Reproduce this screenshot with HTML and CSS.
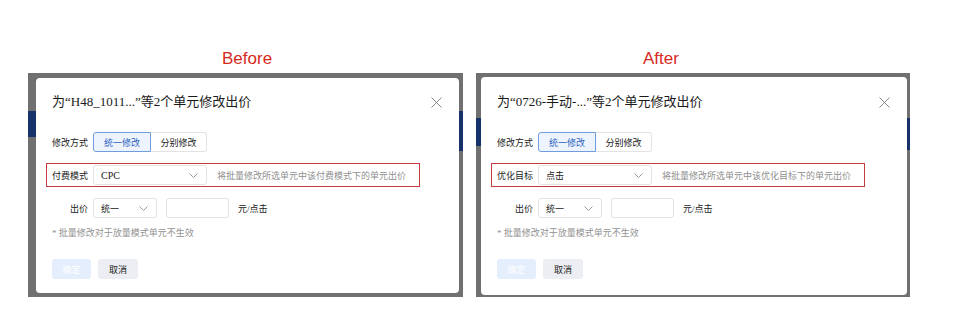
FILE: index.html
```html
<!DOCTYPE html>
<html lang="zh-CN">

<head>
  <meta charset="UTF-8">
  <title>批量修改出价 - Before / After</title>
  <link rel="stylesheet" href="styles.css">
</head>

<body>
  <div class="compare">

    <!-- Before -->
    <section class="panel panel-before">
      <h2 class="panel-title">Before</h2>
      <div class="backdrop backdrop-before">
        <div class="under-bar bar-bl"></div>
        <div class="under-bar bar-br"></div>
        <div class="dialog">
          <div class="dialog-head">
            <h1>为“H48_1011...”等2个单元修改出价</h1>
            <svg class="close" width="11" height="11" viewBox="0 0 11 11">
              <path d="M0.5 0.5L10.5 10.5M10.5 0.5L0.5 10.5" stroke="#8a8a8a" stroke-width="1" fill="none" />
            </svg>
          </div>

          <div class="form-row">
            <span class="label">修改方式</span>
            <div class="segmented">
              <button class="seg active">统一修改</button>
              <button class="seg">分别修改</button>
            </div>
          </div>

          <div class="form-row highlight">
            <span class="label">付费模式</span>
            <div class="select select-wide">
              <span class="latin">CPC</span>
              <svg width="9" height="5" viewBox="0 0 9 5"><path d="M0.5 0.5L4.5 4.5L8.5 0.5" stroke="#9a9a9a" fill="none" /></svg>
            </div>
            <span class="hint">将批量修改所选单元中该付费模式下的单元出价</span>
          </div>

          <div class="form-row">
            <span class="label">出价</span>
            <div class="select select-small">
              <span>统一</span>
              <svg width="9" height="5" viewBox="0 0 9 5"><path d="M0.5 0.5L4.5 4.5L8.5 0.5" stroke="#9a9a9a" fill="none" /></svg>
            </div>
            <div class="input"></div>
            <span class="unit">元/点击</span>
          </div>

          <p class="note">* 批量修改对于放量模式单元不生效</p>

          <div class="actions">
            <button class="btn btn-primary">确定</button>
            <button class="btn btn-cancel">取消</button>
          </div>
        </div>
      </div>
    </section>

    <!-- After -->
    <section class="panel panel-after">
      <h2 class="panel-title">After</h2>
      <div class="backdrop backdrop-after">
        <div class="under-bar bar-al"></div>
        <div class="under-bar bar-ar"></div>
        <div class="dialog">
          <div class="dialog-head">
            <h1>为“0726-手动-...”等2个单元修改出价</h1>
            <svg class="close" width="11" height="11" viewBox="0 0 11 11">
              <path d="M0.5 0.5L10.5 10.5M10.5 0.5L0.5 10.5" stroke="#8a8a8a" stroke-width="1" fill="none" />
            </svg>
          </div>

          <div class="form-row">
            <span class="label">修改方式</span>
            <div class="segmented">
              <button class="seg active">统一修改</button>
              <button class="seg">分别修改</button>
            </div>
          </div>

          <div class="form-row highlight">
            <span class="label">优化目标</span>
            <div class="select select-wide">
              <span>点击</span>
              <svg width="9" height="5" viewBox="0 0 9 5"><path d="M0.5 0.5L4.5 4.5L8.5 0.5" stroke="#9a9a9a" fill="none" /></svg>
            </div>
            <span class="hint">将批量修改所选单元中该优化目标下的单元出价</span>
          </div>

          <div class="form-row">
            <span class="label">出价</span>
            <div class="select select-small">
              <span>统一</span>
              <svg width="9" height="5" viewBox="0 0 9 5"><path d="M0.5 0.5L4.5 4.5L8.5 0.5" stroke="#9a9a9a" fill="none" /></svg>
            </div>
            <div class="input"></div>
            <span class="unit">元/点击</span>
          </div>

          <p class="note">* 批量修改对于放量模式单元不生效</p>

          <div class="actions">
            <button class="btn btn-primary">确定</button>
            <button class="btn btn-cancel">取消</button>
          </div>
        </div>
      </div>
    </section>

  </div>
</body>

</html>
```

FILE: styles.css
```css
/* Basic Reset */
* {
  margin: 0;
  padding: 0;
  box-sizing: border-box;
}

body {
  width: 966px;
  height: 334px;
  background: #fff;
  font-family: "Liberation Serif", "Noto Sans CJK SC", serif;
  color: #222;
  overflow: hidden;
}

/* Two screenshots side by side */
.compare {
  display: flex;
  gap: 13px;
  padding-left: 28px;
}

.panel {
  display: flex;
  flex-direction: column;
}

.panel-before {
  width: 435px;
}

.panel-after {
  width: 434px;
}

.panel-title {
  font-family: "Liberation Sans", "Noto Sans CJK SC", sans-serif;
  font-weight: normal;
  font-size: 17px;
  line-height: 20px;
  color: #d62a21;
  margin-top: 49px;
  margin-bottom: 4px;
}

.panel-before .panel-title {
  padding-left: 194px;
}

.panel-after .panel-title {
  padding-left: 167px;
}

/* Dimmed page behind the dialog */
.backdrop {
  position: relative;
  background: #707070;
  height: 224px;
  display: flex;
}

.backdrop-before {
  padding: 5px 4px 4px 8px;
}

.backdrop-after {
  padding: 4px 3px 2px 5px;
}

.under-bar {
  position: absolute;
  background: #17316b;
  width: 8px;
}

.bar-bl {
  left: 0;
  top: 38px;
  height: 26px;
}

.bar-br {
  right: 0;
  top: 38px;
  height: 40px;
}

.bar-al {
  left: 0;
  top: 45px;
  height: 28px;
}

.bar-ar {
  right: 0;
  top: 45px;
  height: 32px;
}

/* Dialog */
.dialog {
  position: relative;
  z-index: 1;
  flex: 1;
  background: #fff;
  border-radius: 4px;
  padding: 16px 16px 0 16px;
}

.backdrop-after .dialog {
  padding-top: 17px;
}

.dialog-head {
  display: flex;
  justify-content: space-between;
  align-items: center;
  height: 16px;
}

.dialog-head h1 {
  font-size: 13px;
  font-weight: normal;
  color: #1a1a1a;
  line-height: 16px;
}

.close {
  margin-right: 1px;
}

/* Form rows */
.form-row {
  display: flex;
  align-items: center;
  gap: 5px;
  font-size: 9px;
  height: 20px;
}

.form-row + .form-row {
  margin-top: 11px;
}

.dialog-head + .form-row {
  margin-top: 22px;
}

.label {
  width: 36px;
  text-align: right;
  color: #222;
  flex-shrink: 0;
}

.highlight {
  height: 24px;
  margin-left: -6px;
  padding-left: 5px;
  width: 374px;
  border: 1px solid #c23b3f;
}

.segmented {
  display: flex;
  height: 20px;
}

.seg {
  font-family: inherit;
  font-size: 9px;
  width: 58px;
  height: 20px;
  background: #fff;
  color: #222;
  border: 1px solid #e3e3e3;
  border-left: none;
  border-radius: 0 3px 3px 0;
}

.seg.active {
  width: 58px;
  background: #eef4fd;
  color: #2c63c1;
  border: 1px solid #6f9de0;
  border-radius: 3px 0 0 3px;
}

.segmented .seg:last-child {
  width: 56px;
}

.select {
  display: flex;
  align-items: center;
  justify-content: space-between;
  height: 20px;
  border: 1px solid #e3e3e3;
  border-radius: 3px;
  padding: 0 8px 0 7px;
  color: #222;
}

.select-wide {
  width: 114px;
}

.select-small {
  width: 64px;
}

.latin {
  font-size: 10px;
}

.hint {
  color: #8f8f8f;
  margin-left: 5px;
}

.input {
  width: 63px;
  height: 20px;
  border: 1px solid #e3e3e3;
  border-radius: 3px;
  margin-left: 4px;
}

.unit {
  margin-left: 4px;
}

.note {
  font-size: 9px;
  line-height: 12px;
  color: #929292;
  margin-top: 9px;
}

/* Footer buttons */
.actions {
  display: flex;
  gap: 7px;
  margin-top: 20px;
}

.btn {
  font-family: inherit;
  font-size: 9px;
  height: 20px;
  width: 39px;
  border: none;
  border-radius: 3px;
}

.btn-primary {
  background: #e4eefc;
  color: #fff;
}

.btn-cancel {
  width: 40px;
  background: #eceef3;
  color: #222;
}
```
